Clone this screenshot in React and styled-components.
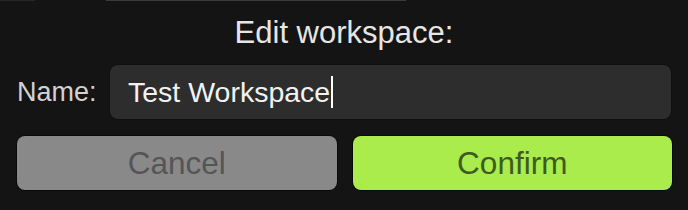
import React from "react";
import styled, { createGlobalStyle } from "styled-components";

const Global = createGlobalStyle`
  html, body { margin: 0; padding: 0; background: #141414; }
  body { font-family: "Liberation Sans", Arial, sans-serif; }
  * { box-sizing: border-box; }
`;

const Dialog = styled.div`
  width: 688px;
  height: 210px;
  background: #141414;
  display: flex;
  flex-direction: column;
  overflow: hidden;
`;

const TopEdge = styled.div`
  display: flex;
  height: 1px;
`;

const EdgeSegment = styled.div`
  width: ${(p) => p.$w}px;
  background: ${(p) => p.$c};
`;

const Body = styled.div`
  display: flex;
  flex-direction: column;
  padding: 15px 16px 0 17px;
`;

const Title = styled.div`
  font-size: 31px;
  line-height: 34px;
  color: #e6e6e6;
  text-align: center;
  padding-right: 1px;
`;

const FieldRow = styled.div`
  display: flex;
  align-items: center;
  gap: 12px;
  margin-top: 15px;
`;

const Label = styled.label`
  font-size: 27px;
  color: #d2d2d2;
  width: 81px;
  flex: none;
`;

const InputBox = styled.div`
  flex: 1;
  height: 54px;
  margin-right: 1px;
  background: #2d2d2d;
  border-radius: 8px;
  box-shadow: 0 0 0 1px #101010;
  display: flex;
  align-items: center;
  padding-left: 18px;
  font-size: 28.5px;
  color: #f2f2f2;
`;

const Caret = styled.span`
  display: inline-block;
  width: 2px;
  height: 32px;
  background: #ffffff;
  margin-left: 1px;
`;

const Buttons = styled.div`
  display: grid;
  grid-template-columns: 1fr 1fr;
  gap: 16px;
  margin-top: 17px;
`;

const Button = styled.button`
  height: 54px;
  border: none;
  border-radius: 8px;
  font-family: "Liberation Sans", Arial, sans-serif;
  font-size: 31.5px;
  padding: 0;
  background: ${(p) => (p.$primary ? "#a9ec4b" : "#898989")};
  color: ${(p) => (p.$primary ? "#3d5a20" : "#555555")};
  box-shadow: 0 0 0 1px rgba(0, 0, 0, 0.55);
  cursor: pointer;
`;

export default function App() {
  return (
    <>
      <Global />
      <Dialog>
        <TopEdge>
          <EdgeSegment $w={35} $c="#262626" />
          <EdgeSegment $w={71} $c="#141414" />
          <EdgeSegment $w={300} $c="#3a3a3a" />
        </TopEdge>
        <Body>
          <Title>Edit workspace:</Title>
          <FieldRow>
            <Label>Name:</Label>
            <InputBox>
              Test Workspace
              <Caret />
            </InputBox>
          </FieldRow>
          <Buttons>
            <Button>Cancel</Button>
            <Button $primary>Confirm</Button>
          </Buttons>
        </Body>
      </Dialog>
    </>
  );
}
